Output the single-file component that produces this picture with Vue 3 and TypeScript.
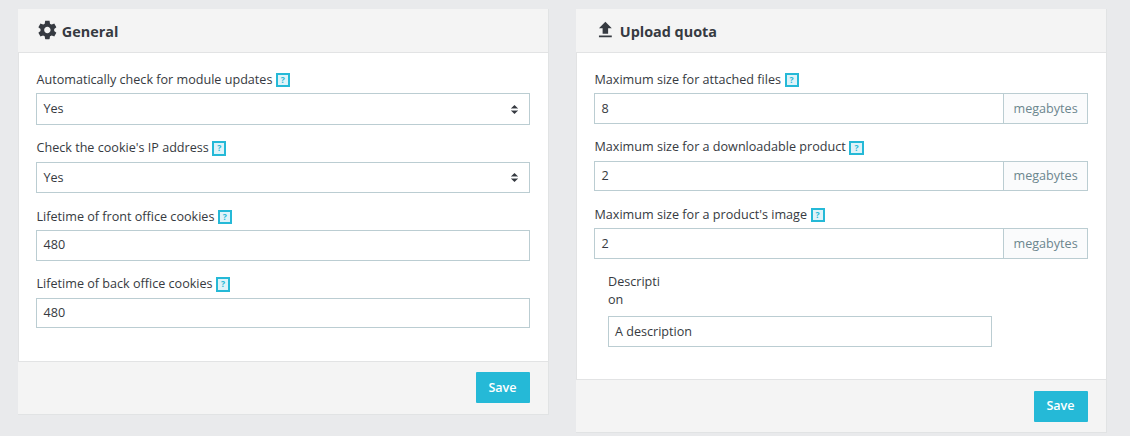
<script setup lang="ts">
interface Field {
  label: string
  value: string
  kind: 'select' | 'input' | 'size'
  height: number
  textTop: number
  raised?: boolean
  tallHelp?: boolean
  wideHelp?: boolean
}

const general: Field[] = [
  { label: 'Automatically check for module updates', value: 'Yes', kind: 'select', height: 32, textTop: 6 },
  { label: "Check the cookie's IP address", value: 'Yes', kind: 'select', height: 31, textTop: 6, raised: true, tallHelp: true },
  { label: 'Lifetime of front office cookies', value: '480', kind: 'input', height: 31, textTop: 5 },
  { label: 'Lifetime of back office cookies', value: '480', kind: 'input', height: 30, textTop: 5, raised: true, tallHelp: true },
]
const quota: Field[] = [
  { label: 'Maximum size for attached files', value: '8', kind: 'size', height: 31, textTop: 6 },
  { label: 'Maximum size for a downloadable product', value: '2', kind: 'size', height: 30, textTop: 5, raised: true, wideHelp: true },
  { label: "Maximum size for a product's image", value: '2', kind: 'size', height: 31, textTop: 6 },
]
const panels = [
  { title: 'General', icon: 'gear', fields: general },
  { title: 'Upload quota', icon: 'upload', fields: quota },
]
</script>

<template>
  <main class="page">
    <section v-for="p in panels" :key="p.title" class="panel" :class="p.icon">
      <header class="head">
        <svg v-if="p.icon === 'gear'" class="icon" width="22" height="22" viewBox="-0.4 0 24 24">
          <path d="M19.43 12.98c.04-.32.07-.64.07-.98s-.03-.66-.07-.98l2.11-1.65c.19-.15.24-.42.12-.64l-2-3.46c-.12-.22-.39-.3-.61-.22l-2.49 1c-.52-.4-1.08-.73-1.69-.98l-.38-2.65C14.46 2.18 14.25 2 14 2h-4c-.25 0-.46.18-.49.42l-.38 2.65c-.61.25-1.17.59-1.69.98l-2.49-1c-.23-.09-.49 0-.61.22l-2 3.46c-.13.22-.07.49.12.64l2.11 1.65c-.04.32-.07.65-.07.98s.03.66.07.98l-2.11 1.65c-.19.15-.24.42-.12.64l2 3.46c.12.22.39.3.61.22l2.49-1c.52.4 1.08.73 1.69.98l.38 2.65c.03.24.24.42.49.42h4c.25 0 .46-.18.49-.42l.38-2.65c.61-.25 1.17-.59 1.69-.98l2.49 1c.23.09.49 0 .61-.22l2-3.46c.12-.22.07-.49-.12-.64l-2.11-1.65zM12 15.5c-1.93 0-3.5-1.57-3.5-3.5s1.57-3.5 3.5-3.5 3.5 1.57 3.5 3.5-1.57 3.5-3.5 3.5z" />
        </svg>
        <svg v-else class="icon" width="22" height="22" viewBox="-0.4 0 24 24">
          <path d="M9 16h6v-6h4l-7-7-7 7h4zm-4 2h14v2H5z" />
        </svg>
        <h3>{{ p.title }}</h3>
      </header>
      <div class="body">
        <div v-for="f in p.fields" :key="f.label" class="field">
          <div class="label" :class="{ raised: f.raised }">
            <span>{{ f.label }}</span>
            <span class="help" :class="{ tall: f.tallHelp, wide: f.wideHelp }">?</span>
          </div>
          <div class="control" :style="{ height: f.height + 'px' }">
            <span class="value" :style="{ paddingTop: f.textTop + 'px' }">{{ f.value }}</span>
            <svg v-if="f.kind === 'select'" class="caret" width="7" height="9" viewBox="0 0 7 9">
              <path d="M3.5 0L6.6 3H.4zM.4 6h6.2L3.5 9z" />
              <path class="edge" d="M0 3h7v1H0zM0 5h7v1H0z" />
            </svg>
            <span v-if="f.kind === 'size'" class="unit" :style="{ paddingTop: f.textTop + 'px' }">megabytes</span>
          </div>
        </div>
        <div v-if="p.icon === 'upload'" class="description">
          <div class="narrow">Description</div>
          <div class="control desc"><span class="value">A description</span></div>
        </div>
      </div>
      <footer class="foot"><button type="button">Save</button></footer>
    </section>
  </main>
</template>

<style>
body {
  background: #e9eaec;
}
</style>

<style scoped>
.page {
  display: flex;
  align-items: flex-start;
  gap: 27px;
  box-sizing: border-box;
  width: 1130px;
  height: 436px;
  padding: 9px 0 0 18px;
  overflow: hidden;
  font-family: "Open Sans", sans-serif;
  font-size: 12.6px;
  color: #363a41;
  background: #e9eaec;
}
.panel {
  box-sizing: border-box;
  display: flex;
  flex-direction: column;
  width: 531px;
  height: 406px;
  border-right: 1px solid #e1e3e4;
  border-bottom: 1px solid #e1e3e4;
}
.panel.upload {
  height: 424px;
}
.head {
  box-sizing: border-box;
  display: flex;
  align-items: flex-start;
  height: 44px;
  padding: 10px 0 0 18px;
  background: #f4f4f4;
  border-bottom: 1px solid #e2e3e4;
}
.icon {
  flex: none;
  fill: #363a41;
}
h3 {
  margin: 3px 0 0 3.8px;
  font-size: 14.4px;
  line-height: 20px;
  font-weight: 700;
  color: #363a41;
}
.body {
  flex: 1;
  min-height: 0;
  padding: 15px 18px 0 17px;
  background: #fff;
  border-left: 1px solid #e2e3e4;
}
.field {
  margin-bottom: 12px;
}
.label {
  box-sizing: border-box;
  display: flex;
  align-items: flex-start;
  gap: 3.5px;
  height: 25px;
  padding: 3px 0 0 0.5px;
  line-height: 18px;
  white-space: nowrap;
}
.label.raised {
  padding-top: 2px;
}
.help {
  box-sizing: border-box;
  width: 14px;
  height: 14px;
  margin-top: 2px;
  border: 2px solid #25b9d7;
  background: #dff3f9;
  color: #25b9d7;
  font-size: 8.6px;
  line-height: 10px;
  font-weight: 700;
  text-align: center;
}
.help.tall {
  height: 15px;
}
.help.wide {
  width: 15px;
  margin-top: 3px;
}
.control {
  box-sizing: border-box;
  display: flex;
  align-items: center;
  border: 1px solid #bbcdd2;
  background: #fff;
}
.value {
  box-sizing: border-box;
  flex: 1;
  height: 100%;
  padding-left: 6.5px;
  line-height: 18px;
}
.caret {
  margin-right: 11px;
  fill: #363a41;
}
.caret .edge {
  fill: #a3a6aa;
}
.unit {
  box-sizing: border-box;
  width: 84px;
  height: 100%;
  padding-left: 9.5px;
  border-left: 1px solid #bbcdd2;
  background: #fafbfc;
  color: #6c868e;
  line-height: 18px;
}
.description {
  width: 384px;
  margin-left: 14px;
}
.narrow {
  width: 53px;
  height: 43px;
  margin-top: 14px;
  line-height: 18px;
  word-break: break-all;
}
.control.desc {
  height: 31px;
}
.desc .value {
  padding: 6px 0 0 6px;
}
.foot {
  box-sizing: border-box;
  display: flex;
  justify-content: flex-end;
  height: 53px;
  padding: 10px 18px 0 0;
  background: #f4f4f4;
  border-top: 1px solid #e2e3e4;
}
.upload .foot {
  padding-top: 11px;
}
button {
  width: 54px;
  height: 31px;
  padding: 0 1px 0 0;
  border: 0;
  border-radius: 1px;
  background: #25b9d7;
  color: #fff;
  font: 600 12.6px/30px "Open Sans", sans-serif;
}
.upload button {
  padding-bottom: 2px;
}
</style>
